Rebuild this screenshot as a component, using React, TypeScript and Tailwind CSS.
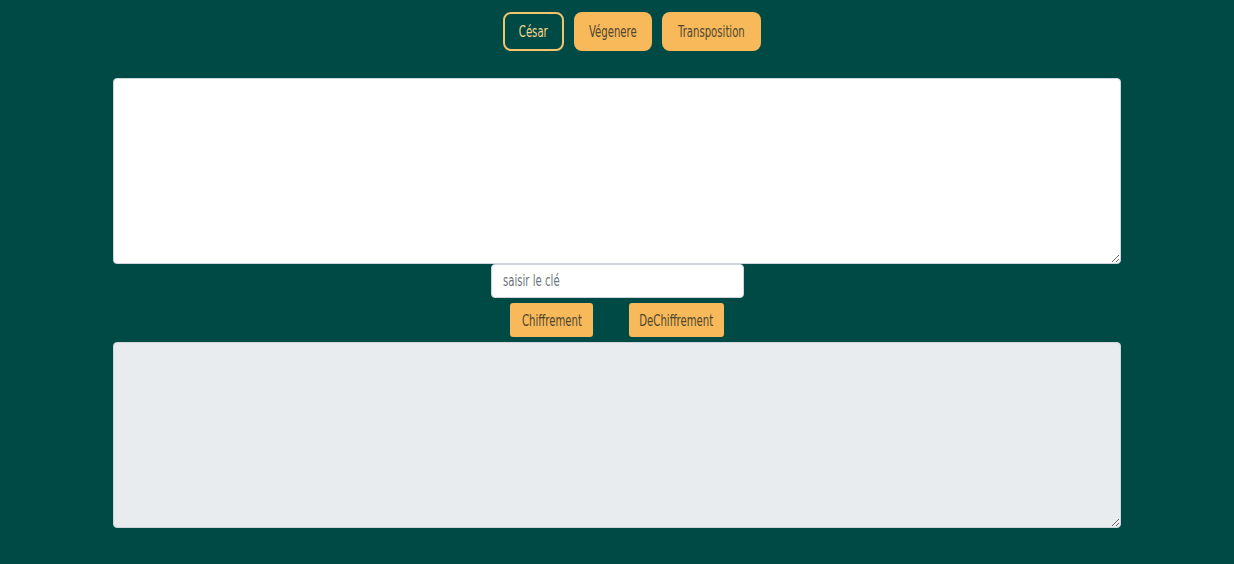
import React from "react";

const font = { fontFamily: '"DejaVu Sans Condensed", "DejaVu Sans", sans-serif' };

function Label({ children }: { children: React.ReactNode }) {
  return <span className="inline-block scale-x-[0.75] whitespace-nowrap pt-[2px]">{children}</span>;
}

export default function App() {
  return (
    <div className="min-h-[564px] w-full bg-[#004a46] pt-3" style={font}>
      <div className="flex justify-center gap-[10px] pl-[29px]">
        <button className="flex h-[39px] w-[61px] items-center justify-center rounded-lg border-2 border-[#f2c46b] text-[15px] text-[#f7d68c]">
          <Label>César</Label>
        </button>
        <button className="flex h-[39px] w-[78px] items-center justify-center rounded-lg bg-[#f8b95a] text-[15px] text-[#4d4630]">
          <Label>Végenere</Label>
        </button>
        <button className="flex h-[39px] w-[99px] items-center justify-center rounded-lg bg-[#f8b95a] text-[15px] text-[#4d4630]">
          <Label>Transposition</Label>
        </button>
      </div>

      <div className="mt-[27px] flex flex-col items-center">
        <textarea className="block h-[186px] w-[1008px] rounded border border-[#ced4da] bg-white" />
        <div className="relative h-[34px] w-[253px]">
          <input className="block h-full w-full rounded border border-[#ced4da] bg-white px-[11px] text-[14px] text-[#495057] outline-none" />
          <span className="pointer-events-none absolute left-[12px] top-[8px] text-[15px] leading-[18px] text-[#6c757d]">
            <span className="inline-block origin-left scale-x-[0.75]">saisir le clé</span>
          </span>
        </div>
        <div className="mt-[5px] flex gap-[36px]">
          <button className="flex h-[34px] w-[83px] items-center justify-center rounded-[3px] bg-[#f8b95a] text-[15px] text-[#4d4630]">
            <Label>Chiffrement</Label>
          </button>
          <button className="flex h-[34px] w-[95px] items-center justify-center rounded-[3px] bg-[#f8b95a] text-[15px] text-[#4d4630]">
            <Label>DeChiffrement</Label>
          </button>
        </div>
        <textarea
          disabled
          className="mt-[5px] block h-[186px] w-[1008px] rounded border border-[#ced4da] bg-[#e9ecef]"
        />
      </div>
    </div>
  );
}
